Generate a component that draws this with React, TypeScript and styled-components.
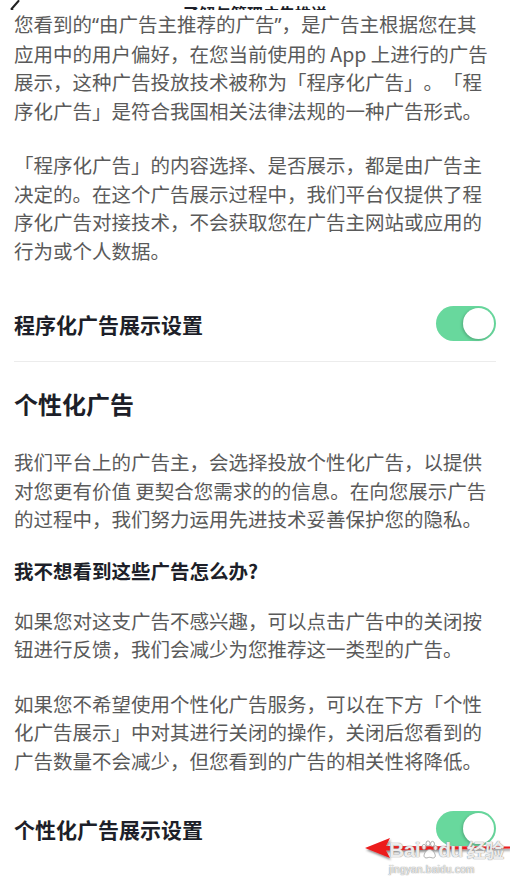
import React from "react";
import styled, { createGlobalStyle } from "styled-components";

const GlobalStyle = createGlobalStyle`
  html, body {
    margin: 0;
    padding: 0;
    background: #ffffff;
  }
  body {
    font-family: "Noto Sans CJK SC", "Noto Sans", sans-serif;
    -webkit-font-smoothing: antialiased;
  }
`;

const Page = styled.div`
  position: relative;
  width: 510px;
  height: 890px;
  overflow: hidden;
  background: #ffffff;
`;

const Header = styled.header`
  height: 10px;
  overflow: hidden;
  display: grid;
  grid-template-columns: 44px 1fr 44px;
  align-items: end;
`;

const BackIcon = styled.svg`
  margin: 0 0 6px 10px;
  display: block;
`;

const HeaderTitle = styled.h1`
  margin: 0 0 1px;
  font-size: 16px;
  font-weight: 600;
  line-height: 20px;
  text-align: center;
  color: #1d1f29;
`;

const Content = styled.main`
  padding: 0 19px 0 14px;
  display: flex;
  flex-direction: column;
`;

const Paragraph = styled.p<{ $top: number }>`
  margin: ${(p) => p.$top}px 0 0;
  font-size: 19.5px;
  line-height: 28.5px;
  color: #5a5a5a;
  text-spacing-trim: space-all;
`;

/* curly quotes stay proportional, as in the app */
const Quote = styled.span`
  font-family: "Noto Sans", sans-serif;
`;

const SettingRow = styled.div<{ $top: number }>`
  margin: ${(p) => p.$top}px -5px 0 0;
  display: flex;
  align-items: center;
  justify-content: space-between;
  height: 35px;
`;

const SettingLabel = styled.span`
  font-size: 21px;
  font-weight: 700;
  color: #1d1f29;
`;

const Switch = styled.div<{ $on: boolean }>`
  position: relative;
  width: 60px;
  height: 35px;
  border-radius: 18px;
  background: ${(p) => (p.$on ? "#68d89d" : "#e2e2e2")};
  flex-shrink: 0;
`;

const Knob = styled.span<{ $on: boolean }>`
  position: absolute;
  top: 2px;
  left: ${(p) => (p.$on ? "27px" : "2px")};
  width: 31px;
  height: 31px;
  border-radius: 50%;
  background: #ffffff;
  box-shadow: -1px 1px 3px rgba(0, 0, 0, 0.22);
`;

const Divider = styled.hr`
  margin: 20px -5px 0 0;
  border: 0;
  border-top: 1px solid #ececec;
`;

const SectionTitle = styled.h2`
  margin: 26px 0 0;
  font-size: 24px;
  font-weight: 700;
  line-height: 32px;
  color: #1d1f29;
`;

const Question = styled.h3`
  margin: 22px 0 0;
  font-size: 19.5px;
  font-weight: 700;
  line-height: 30px;
  color: #1d1f29;
`;

const ArrowMark = styled.svg`
  position: absolute;
  left: 356px;
  top: 834px;
`;

const Watermark = styled.div`
  position: absolute;
  left: 389px;
  top: 838px;
  display: flex;
  flex-direction: column;
  align-items: flex-start;
  color: rgba(255, 255, 255, 0.85);
  text-shadow: 0 0 1px rgba(130, 130, 130, 0.85), 0 0 1px rgba(130, 130, 130, 0.85);
  pointer-events: none;
`;

const Brand = styled.div`
  display: flex;
  align-items: center;
  font-family: "Liberation Sans", Arial, sans-serif;
  font-size: 21px;
  font-weight: 700;
  line-height: 24px;
  letter-spacing: -0.5px;
`;

const BrandCn = styled.span`
  margin-left: 4px;
  font-family: "Noto Sans CJK SC", sans-serif;
  font-size: 19px;
  font-weight: 700;
`;

const Site = styled.div`
  margin-top: 2px;
  font-family: "Liberation Sans", Arial, sans-serif;
  font-size: 10px;
  line-height: 12px;
  letter-spacing: 0.3px;
`;

function Toggle({ on }: { on: boolean }) {
  return (
    <Switch $on={on}>
      <Knob $on={on} />
    </Switch>
  );
}

function Paw() {
  return (
    <svg width="18" height="20" viewBox="0 0 18 20">
      <g fill="rgba(255,255,255,0.85)" stroke="#9a9a9a" strokeWidth="0.8">
        <ellipse cx="4" cy="7" rx="2" ry="2.6" />
        <ellipse cx="8" cy="3.5" rx="2" ry="2.6" />
        <ellipse cx="12.5" cy="4" rx="2" ry="2.6" />
        <ellipse cx="15.5" cy="8" rx="1.8" ry="2.4" />
        <path d="M9.5 9.5c-3 0-5.5 4-5.5 6.3 0 1.8 1.6 2.4 3 2.1 1.2-.3 1.8-.6 2.6-.6s1.5.3 2.7.6c1.5.3 3-.3 3-2.1 0-2.3-2.7-6.3-5.8-6.3z" />
      </g>
    </svg>
  );
}

export default function App() {
  return (
    <Page>
      <GlobalStyle />
      <Header>
        <BackIcon width="10" height="18" viewBox="0 0 10 18">
          <path d="M8.5 1 1.5 9l7 8" fill="none" stroke="#222" strokeWidth="2" strokeLinecap="round" strokeLinejoin="round" />
        </BackIcon>
        <HeaderTitle>了解与管理广告推送</HeaderTitle>
        <span />
      </Header>
      <Content>
        <Paragraph $top={0}>
          您看到的<Quote>“</Quote>由广告主推荐的广告<Quote>”</Quote>，是广告主根据您在其应用中的用户偏好，在您当前使用的 App 上进行的广告展示，这种广告投放技术被称为「程序化广告」。「程序化广告」是符合我国相关法律法规的一种广告形式。
        </Paragraph>
        <Paragraph $top={26}>
          「程序化广告」的内容选择、是否展示，都是由广告主决定的。在这个广告展示过程中，我们平台仅提供了程序化广告对接技术，不会获取您在广告主网站或应用的行为或个人数据。
        </Paragraph>
        <SettingRow $top={41}>
          <SettingLabel>程序化广告展示设置</SettingLabel>
          <Toggle on />
        </SettingRow>
        <Divider />
        <SectionTitle>个性化广告</SectionTitle>
        <Paragraph $top={28}>
          我们平台上的广告主，会选择投放个性化广告，以提供对您更有价值 更契合您需求的的信息。在向您展示广告的过程中，我们努力运用先进技术妥善保护您的隐私。
        </Paragraph>
        <Question>我不想看到这些广告怎么办?</Question>
        <Paragraph $top={21}>
          如果您对这支广告不感兴趣，可以点击广告中的关闭按钮进行反馈，我们会减少为您推荐这一类型的广告。
        </Paragraph>
        <Paragraph $top={26}>
          如果您不希望使用个性化广告服务，可以在下方「个性化广告展示」中对其进行关闭的操作，关闭后您看到的广告数量不会减少，但您看到的广告的相关性将降低。
        </Paragraph>
        <SettingRow $top={36}>
          <SettingLabel>个性化广告展示设置</SettingLabel>
          <Toggle on />
        </SettingRow>
      </Content>

      <ArrowMark width="154" height="28" viewBox="0 0 154 28">
        <defs>
          <filter id="arrowShadow" x="-10%" y="-40%" width="120%" height="200%">
            <feDropShadow dx="1" dy="2" stdDeviation="1.2" floodColor="#000" floodOpacity="0.45" />
          </filter>
        </defs>
        <g filter="url(#arrowShadow)" fill="#ec1b1e">
          <path d="M9 14 34 4 30 12 154 12.6 154 14.6 30 16.5 34 24z" />
        </g>
      </ArrowMark>

      <Watermark>
        <Brand>
          Bai
          <Paw />
          du
          <BrandCn>经验</BrandCn>
        </Brand>
        <Site>jingyan.baidu.com</Site>
      </Watermark>
    </Page>
  );
}
